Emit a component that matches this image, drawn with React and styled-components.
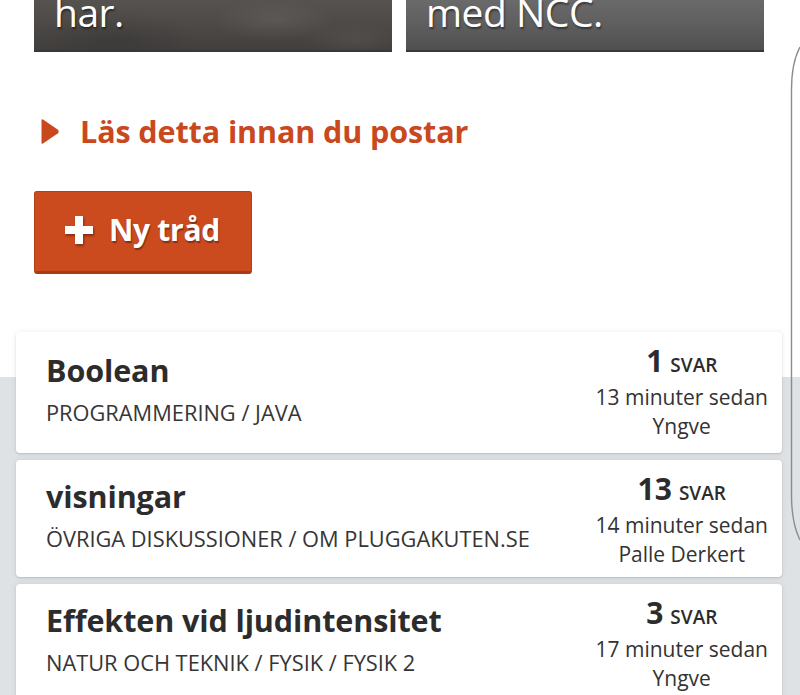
import React from "react";
import styled, { createGlobalStyle, css } from "styled-components";

const GlobalStyle = createGlobalStyle`
  html, body {
    margin: 0;
    padding: 0;
    background: #ffffff;
  }
  body {
    width: 800px;
    height: 695px;
    overflow: hidden;
    font-family: "Open Sans", "Noto Sans", "Liberation Sans", sans-serif;
    color: #2e2e2e;
  }
`;

const Page = styled.div`
  position: relative;
  width: 800px;
  height: 695px;
  overflow: hidden;
  display: flex;
  flex-direction: column;
  & > * {
    flex-shrink: 0;
  }
`;

const Banners = styled.div`
  display: grid;
  grid-template-columns: 358px 358px;
  column-gap: 14px;
  padding: 0 34px;
  height: 52px;
`;

const bannerVariants = {
  stone: css`
    background:
      radial-gradient(ellipse 90px 30px at 240px 20px, rgba(255,255,255,0.07), transparent 70%),
      radial-gradient(ellipse 120px 40px at 80px 40px, rgba(0,0,0,0.12), transparent 70%),
      radial-gradient(ellipse 70px 25px at 320px 40px, rgba(255,255,255,0.05), transparent 70%),
      linear-gradient(180deg, #555250 0%, #4a4745 60%, #42403e 100%);
  `,
  steel: css`
    background: linear-gradient(180deg, #6a6a6a 0%, #5e5e5e 50%, #505050 100%);
  `,
};

const Banner = styled.div`
  position: relative;
  overflow: hidden;
  border-bottom: 2px solid #3a3836;
  box-sizing: border-box;
  ${(p) => bannerVariants[p.$variant]}
`;

const BannerText = styled.div`
  padding-left: 20px;
  margin-top: -10px;
  font-family: "Open Sans", "Noto Sans", sans-serif;
  font-size: 39px;
  line-height: 44px;
  font-weight: 400;
  color: #ffffff;
  letter-spacing: -0.5px;
  white-space: nowrap;
  text-shadow: 1px 2px 2px rgba(0, 0, 0, 0.45);
`;

const ReadFirst = styled.a`
  display: flex;
  align-items: center;
  gap: 20px;
  margin: 61px 0 0 41px;
  height: 36px;
  font-size: 30.5px;
  font-weight: 700;
  color: #c9481e;
  text-decoration: none;
  letter-spacing: -0.1px;
`;

const Triangle = styled.svg`
  width: 19px;
  height: 27px;
  flex: none;
`;

const NewThreadButton = styled.button`
  align-self: flex-start;
  display: flex;
  align-items: center;
  gap: 16px;
  margin: 42px 0 0 34px;
  width: 218px;
  height: 83px;
  padding: 0 0 4px 30px;
  box-sizing: border-box;
  background: #cb4a1e;
  border: 1px solid #b23f16;
  border-bottom: 3px solid #a83b14;
  border-radius: 3px;
  color: #ffffff;
  font-family: "Open Sans", "Noto Sans", sans-serif;
  font-size: 30px;
  font-weight: 700;
  letter-spacing: -0.3px;
  text-shadow: 1px 2px 1px rgba(0, 0, 0, 0.35);
  cursor: pointer;
`;

const PlusIcon = styled.svg`
  width: 28px;
  height: 28px;
  flex: none;
  filter: drop-shadow(1px 2px 1px rgba(0, 0, 0, 0.35));
`;

const ThreadList = styled.div`
  flex: 1 0 auto;
  margin-top: 58px;
  padding: 0 18px 0 16px;
  display: flex;
  flex-direction: column;
  gap: 7px;
  background: linear-gradient(180deg, #ffffff 0px, #ffffff 45px, #dee2e5 45px, #dee2e5 100%);
`;

const Card = styled.div`
  display: flex;
  align-items: flex-start;
  justify-content: space-between;
  min-height: ${(p) => p.$height}px;
  box-sizing: border-box;
  padding: 11px 14px 0 30px;
  background: #ffffff;
  border-radius: 4px;
  box-shadow: 0 0 6px rgba(0, 0, 0, 0.07), 0 1px 2px rgba(0, 0, 0, 0.14);
`;

const Main = styled.div`
  display: flex;
  flex-direction: column;
  gap: 10px;
  margin-top: ${(p) => p.$offset}px;
`;

const Title = styled.div`
  font-size: 30.5px;
  line-height: 38px;
  font-weight: 700;
  color: #2c2c2c;
  letter-spacing: -0.1px;
`;

const Category = styled.div`
  font-size: 21.8px;
  line-height: 28px;
  font-weight: 400;
  color: #363636;
  text-transform: uppercase;
`;

const Meta = styled.div`
  display: flex;
  flex-direction: column;
  align-items: center;
  text-align: center;
  color: #333333;
`;

const Replies = styled.div`
  display: flex;
  align-items: baseline;
  gap: 7px;
  line-height: 35px;
`;

const ReplyCount = styled.span`
  font-size: 30px;
  font-weight: 700;
  color: #2c2c2c;
`;

const ReplyLabel = styled.span`
  font-size: 19px;
  font-weight: 600;
  color: #2c2c2c;
  text-transform: uppercase;
`;

const MetaLine = styled.div`
  font-size: 21px;
  line-height: 29px;
  white-space: nowrap;
`;

const EdgeOverlay = styled.svg`
  position: absolute;
  top: 0;
  right: 0;
  width: 16px;
  height: 560px;
  pointer-events: none;
`;

const threads = [
  {
    title: "Boolean",
    category: "Programmering / Java",
    replies: 1,
    time: "13 minuter sedan",
    author: "Yngve",
    height: 121,
    offset: 8,
  },
  {
    title: "visningar",
    category: "Övriga diskussioner / Om Pluggakuten.se",
    replies: 13,
    time: "14 minuter sedan",
    author: "Palle Derkert",
    height: 117,
    offset: 6,
  },
  {
    title: "Effekten vid ljudintensitet",
    category: "Natur och teknik / Fysik / Fysik 2",
    replies: 3,
    time: "17 minuter sedan",
    author: "Yngve",
    height: 117,
    offset: 6,
  },
];

export default function App() {
  return (
    <>
      <GlobalStyle />
      <Page>
        <Banners>
          <Banner $variant="stone">
            <BannerText>har.</BannerText>
          </Banner>
          <Banner $variant="steel">
            <BannerText>med NCC.</BannerText>
          </Banner>
        </Banners>

        <ReadFirst href="#">
          <Triangle viewBox="0 0 19 27">
            <path
              d="M2 1.5 L17 11.8 Q18.6 13.5 17 15.2 L2 25.5 Q0.5 26.3 0.5 24.5 L0.5 2.5 Q0.5 0.7 2 1.5 Z"
              fill="#c9481e"
            />
          </Triangle>
          Läs detta innan du postar
        </ReadFirst>

        <NewThreadButton>
          <PlusIcon viewBox="0 0 28 28">
            <path d="M10 0 H18 V10 H28 V18 H18 V28 H10 V18 H0 V10 H10 Z" fill="#ffffff" />
          </PlusIcon>
          Ny tråd
        </NewThreadButton>

        <ThreadList>
          {threads.map((t) => (
            <Card key={t.title} $height={t.height}>
              <Main $offset={t.offset}>
                <Title>{t.title}</Title>
                <Category>{t.category}</Category>
              </Main>
              <Meta>
                <Replies>
                  <ReplyCount>{t.replies}</ReplyCount>
                  <ReplyLabel>svar</ReplyLabel>
                </Replies>
                <MetaLine>{t.time}</MetaLine>
                <MetaLine>{t.author}</MetaLine>
              </Meta>
            </Card>
          ))}
        </ThreadList>

        <EdgeOverlay viewBox="0 0 16 560">
          <path
            d="M16 47 C10 58 7.5 70 7.5 90 L7.5 495 C7.5 515 10 528 16 540"
            fill="none"
            stroke="#8c8c8c"
            strokeWidth="1.4"
          />
        </EdgeOverlay>
      </Page>
    </>
  );
}
